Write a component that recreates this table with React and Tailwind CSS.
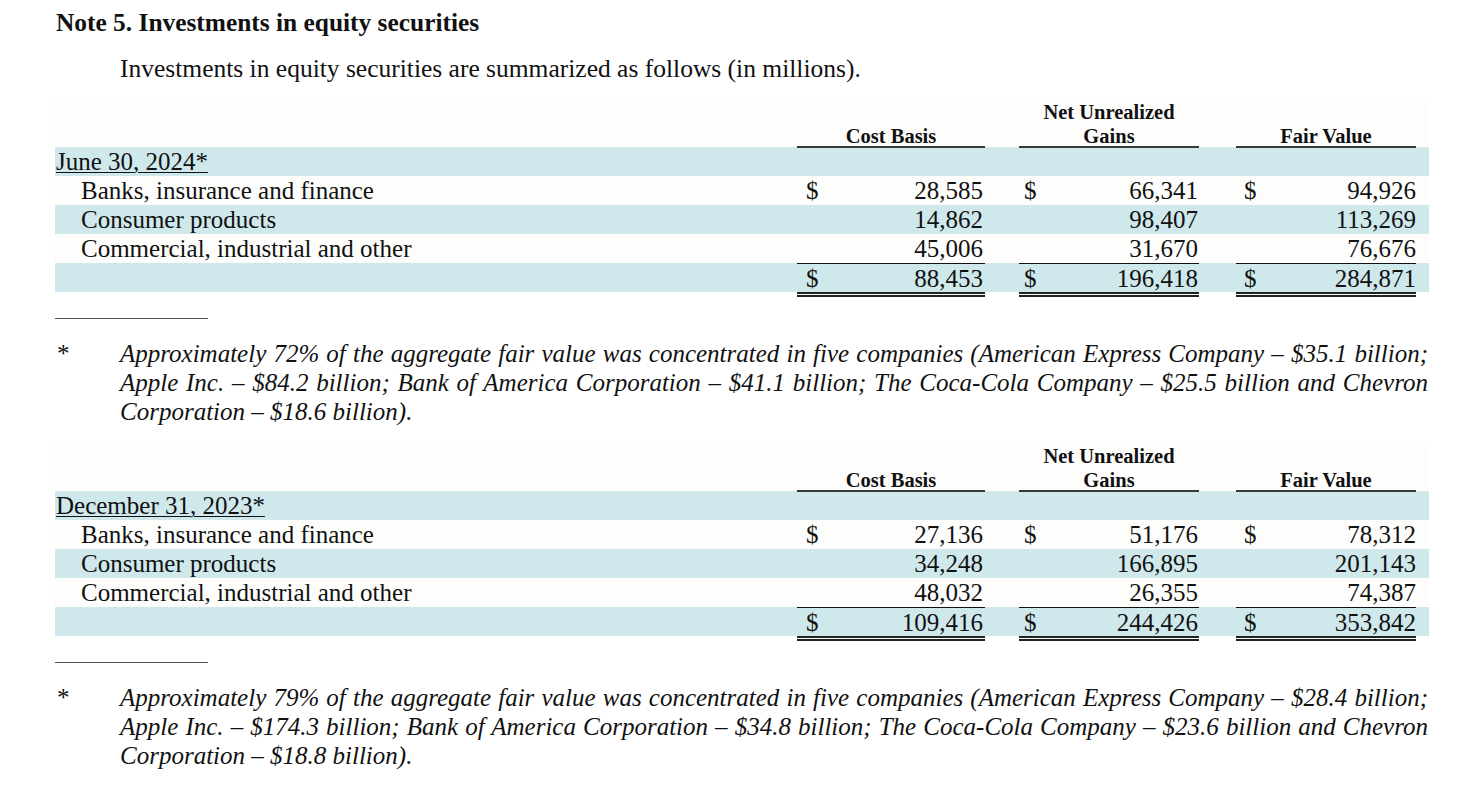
import React from 'react';

const tables = [
  {
    date: 'June 30, 2024*',
    rows: [
      ['Banks, insurance and finance', '28,585', '66,341', '94,926', true],
      ['Consumer products', '14,862', '98,407', '113,269'],
      ['Commercial, industrial and other', '45,006', '31,670', '76,676'],
    ],
    total: ['88,453', '196,418', '284,871'],
    note: [
      'Approximately 72% of the aggregate fair value was concentrated in five companies (American Express Company – $35.1 billion;',
      'Apple Inc. – $84.2 billion; Bank of America Corporation – $41.1 billion; The Coca-Cola Company – $25.5 billion and Chevron',
      'Corporation – $18.6 billion).',
    ],
  },
  {
    date: 'December 31, 2023*',
    rows: [
      ['Banks, insurance and finance', '27,136', '51,176', '78,312', true],
      ['Consumer products', '34,248', '166,895', '201,143'],
      ['Commercial, industrial and other', '48,032', '26,355', '74,387'],
    ],
    total: ['109,416', '244,426', '353,842'],
    note: [
      'Approximately 79% of the aggregate fair value was concentrated in five companies (American Express Company – $28.4 billion;',
      'Apple Inc. – $174.3 billion; Bank of America Corporation – $34.8 billion; The Coca-Cola Company – $23.6 billion and Chevron',
      'Corporation – $18.8 billion).',
    ],
  },
];

const grid = 'grid grid-cols-[742px_188px_34px_180px_37px_180px_13px]';
const pads = ['pl-[9px] pr-[2px]', 'pl-[5px] pr-[1px]', 'pl-[8px] pr-0'];

function Num({ value, dollar, pad, extra = '' }) {
  return (
    <div className={`flex justify-between ${pad} ${extra}`}>
      <span>{dollar ? '$' : ''}</span>
      <span>{value}</span>
    </div>
  );
}

function Table({ data }) {
  return (
    <div className="ml-[55px] w-[1374px] bg-[#fdfdfc] text-[25px] leading-[29px]">
      {/* header */}
      <div className={`${grid} h-[49px] items-end text-[20.5px] leading-[24px] font-bold`}>
        <div />
        <div className="text-center border-b-2 border-[#3a3a3a]">
          <div className="translate-y-[2px]">Cost Basis</div>
        </div>
        <div />
        <div className="text-center border-b-2 border-[#3a3a3a]">
          <div className="translate-y-[2px]">
            Net Unrealized
            <br />
            Gains
          </div>
        </div>
        <div />
        <div className="text-center border-b-2 border-[#3a3a3a]">
          <div className="translate-y-[2px]">Fair Value</div>
        </div>
        <div />
      </div>

      <div className={`${grid} h-[29px] bg-[#cfe8ec]`}>
        <div className="pl-px underline decoration-1 underline-offset-2">{data.date}</div>
      </div>

      {data.rows.map((r, i) => (
        <div key={r[0]} className={`${grid} h-[29px] ${i % 2 === 1 ? 'bg-[#cfe8ec]' : ''}`}>
          <div className="pl-[26px]">{r[0]}</div>
          <Num value={r[1]} dollar={r[4]} pad={pads[0]} />
          <div />
          <Num value={r[2]} dollar={r[4]} pad={pads[1]} />
          <div />
          <Num value={r[3]} dollar={r[4]} pad={pads[2]} />
          <div />
        </div>
      ))}

      <div className={`${grid} h-[29px] bg-[#cfe8ec]`}>
        <div />
        <Num value={data.total[0]} dollar pad={pads[0]} extra="border-t border-[#111]" />
        <div />
        <Num value={data.total[1]} dollar pad={pads[1]} extra="border-t border-[#111]" />
        <div />
        <Num value={data.total[2]} dollar pad={pads[2]} extra="border-t border-[#111]" />
        <div />
      </div>
      <div className={`${grid} h-[5px] bg-white`}>
        <div />
        <div className="border-t-[5px] border-double border-[#222]" />
        <div />
        <div className="border-t-[5px] border-double border-[#222]" />
        <div />
        <div className="border-t-[5px] border-double border-[#222]" />
        <div />
      </div>
    </div>
  );
}

function Footnote({ lines }) {
  return (
    <div className="text-[25px] leading-[29px]">
      <div className="ml-[55px] w-[153px] border-t border-[#555]" />
      <div className="flex mt-[20px]">
        <div className="w-[120px] pl-[57px]">*</div>
        <div className="w-[1308px] italic whitespace-nowrap">
          {lines.map((l, i) => (
            <div
              key={l}
              className={i < lines.length - 1 ? 'text-justify [text-align-last:justify]' : ''}
            >
              {l}
            </div>
          ))}
        </div>
      </div>
    </div>
  );
}

export default function App() {
  return (
    <div className="w-[1464px] h-[790px] bg-white text-[#111] font-['Liberation_Serif',serif] overflow-hidden">
      <h1 className="pt-[8px] pl-[56px] text-[25.4px] leading-[29px] font-bold">
        Note 5. Investments in equity securities
      </h1>
      <p className="mt-[17px] pl-[120px] text-[25.5px] leading-[29px]">
        Investments in equity securities are summarized as follows (in millions).
      </p>

      <div className="mt-[15px]">
        <Table data={tables[0]} />
      </div>
      <div className="mt-[21px]">
        <Footnote lines={tables[0].note} />
      </div>

      <div className="mt-[16px]">
        <Table data={tables[1]} />
      </div>
      <div className="mt-[21px]">
        <Footnote lines={tables[1].note} />
      </div>
    </div>
  );
}
